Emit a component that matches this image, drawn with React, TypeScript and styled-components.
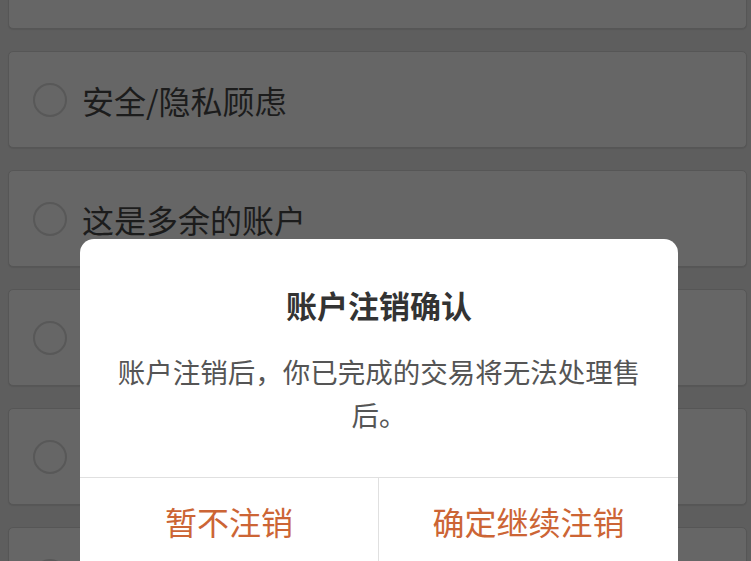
import React from "react";
import styled, { createGlobalStyle } from "styled-components";

const Global = createGlobalStyle`
  html, body { margin: 0; padding: 0; background: #5e5e5e; overflow: hidden; }
  body { font-family: "Noto Sans CJK SC", "Noto Sans", sans-serif; }
`;

const Page = styled.div`
  width: 751px;
  height: 561px;
  overflow: hidden;
  position: relative;
  background: #5e5e5e;
`;

const List = styled.div`
  display: flex;
  flex-direction: column;
  gap: 22px;
  padding: 0 4px 0 8px;
  margin-top: -68px;
`;

const Card = styled.div`
  height: 95px;
  border: 1px solid #565656;
  border-radius: 5px;
  background: #666666;
  display: flex;
  align-items: center;
  gap: 15px;
  padding-left: 24px;
  box-shadow: 0 1px 1px rgba(0, 0, 0, 0.08);
`;

const Radio = styled.span`
  width: 30px;
  height: 30px;
  border-radius: 50%;
  border: 2px solid #585858;
  flex: none;
`;

const Label = styled.span`
  font-size: 32px;
  color: #1c1c1c;
  line-height: 1;
`;

const Dialog = styled.div`
  position: absolute;
  left: 80px;
  top: 239px;
  width: 598px;
  height: 340px;
  background: #ffffff;
  border-radius: 14px;
  display: flex;
  flex-direction: column;
`;

const Title = styled.div`
  padding-top: 46px;
  font-size: 31px;
  line-height: 40px;
  font-weight: 700;
  color: #333333;
  text-align: center;
`;

const Body = styled.div`
  margin-top: 25px;
  padding: 0 32px 41px;
  font-size: 27.5px;
  line-height: 43px;
  color: #555555;
  text-align: center;
`;

const Actions = styled.div`
  display: grid;
  grid-template-columns: 299px 1fr;
  border-top: 1.5px solid #e0e0e0;
  flex: 1;
`;

const Action = styled.div<{ $divider?: boolean }>`
  display: flex;
  justify-content: center;
  padding-top: 22px;
  font-size: 32px;
  line-height: 42px;
  color: #cc6535;
  ${(p) => (p.$divider ? "border-right: 1.5px solid #e0e0e0;" : "")}
`;

const reasons = ["", "安全/隐私顾虑", "这是多余的账户", "", "", ""];

export default function App() {
  return (
    <Page>
      <Global />
      <List>
        {reasons.map((r, i) => (
          <Card key={i}>
            {i > 0 && <Radio />}
            {r && <Label>{r}</Label>}
          </Card>
        ))}
      </List>
      <Dialog>
        <Title>账户注销确认</Title>
        <Body>账户注销后，你已完成的交易将无法处理售后。</Body>
        <Actions>
          <Action $divider>暂不注销</Action>
          <Action>确定继续注销</Action>
        </Actions>
      </Dialog>
    </Page>
  );
}
